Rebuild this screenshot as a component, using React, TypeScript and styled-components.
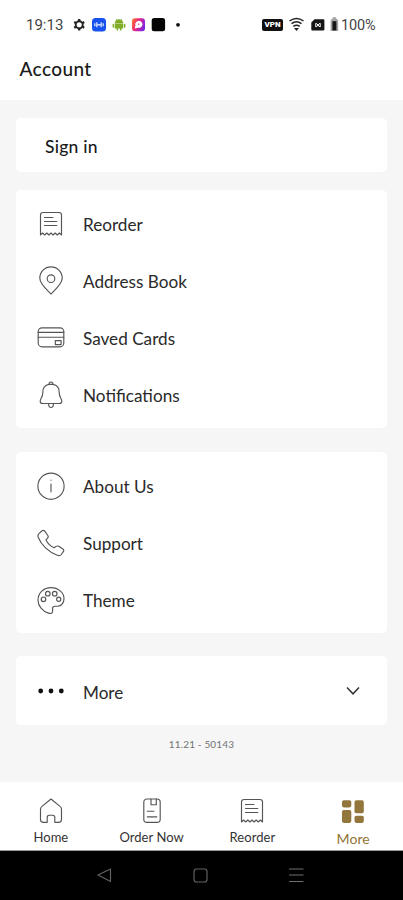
import React from "react";
import styled, { createGlobalStyle } from "styled-components";

const GlobalStyle = createGlobalStyle`
  * { box-sizing: border-box; }
  body { margin: 0; background: #f6f6f6; }
`;

const Screen = styled.div`
  width: 403px;
  height: 900px;
  display: flex;
  flex-direction: column;
  overflow: hidden;
  background: #f6f6f6;
  color: #2a2a2a;
  font-family: Lato, "Open Sans", sans-serif;
`;

const StatusBar = styled.div`
  height: 50px;
  flex: none;
  display: flex;
  align-items: center;
  justify-content: space-between;
  padding: 0 26px 0 26px;
  background: #fff;
  font-family: Roboto, sans-serif;
  font-size: 15px;
  color: #444;
`;

const Cluster = styled.div<{ $gap: number }>`
  display: flex;
  align-items: center;
  gap: ${(p) => p.$gap}px;
`;

const Clock = styled.span`
  width: 40px;
  white-space: nowrap;
`;

const Battery = styled.span`
  width: 36px;
  font-size: 14.5px;
  letter-spacing: -0.15px;
  white-space: nowrap;
`;

const Header = styled.header`
  height: 50px;
  flex: none;
  padding: 6px 19px 0 19.5px;
  background: #fff;
`;

const Title = styled.h1`
  margin: 0;
  font-size: 19px;
  line-height: 26px;
  font-weight: 500;
  letter-spacing: 0.4px;
  color: #1a1a1a;
`;

const Content = styled.main`
  flex: 1;
  padding: 18px 16px 0;
`;

const Card = styled.section<{ $height: number; $top?: number; $bottom: number }>`
  height: ${(p) => p.$height}px;
  margin-bottom: ${(p) => p.$bottom}px;
  padding-top: ${(p) => p.$top ?? 0}px;
  border-radius: 5px;
  background: #fff;
`;

const SignIn = styled.div`
  height: 54px;
  padding: 2px 29px 0;
  display: flex;
  align-items: center;
  font-size: 17.5px;
  font-weight: 500;
  letter-spacing: 0.25px;
  color: #1a1a1a;
`;

const Row = styled.div<{ $height?: number }>`
  height: ${(p) => p.$height ?? 57}px;
  display: flex;
  align-items: center;
  padding: 0 26px 0 20px;
  gap: 17px;
`;

const RowLabel = styled.span<{ $drop?: number }>`
  flex: 1;
  padding-top: ${(p) => p.$drop ?? 1}px;
  font-size: 17.15px;
  line-height: 22px;
  white-space: nowrap;
`;

const Icon = styled.svg<{ $size?: number }>`
  display: block;
  flex: none;
  width: ${(p) => p.$size ?? 30}px;
  height: ${(p) => p.$size ?? 30}px;
  fill: none;
  stroke: #555;
  stroke-width: 1.15;
  stroke-linecap: round;
  stroke-linejoin: round;
`;

const Glyph = styled.svg`
  display: block;
  flex: none;
`;

const Version = styled.div`
  text-align: center;
  font-size: 10px;
  line-height: 14px;
  color: #737373;
  letter-spacing: 0.15px;
`;

const TabBar = styled.nav`
  height: 69px;
  flex: none;
  display: grid;
  grid-template-columns: repeat(4, 1fr);
  background: #fff;
  border-bottom: 1px solid #999;
`;

const Tab = styled.div<{ $active?: boolean }>`
  display: flex;
  flex-direction: column;
  align-items: center;
  padding-top: 14px;
  padding-left: 1px;
  font-size: ${(p) => (p.$active ? 14 : 13)}px;
  line-height: 16px;
  letter-spacing: 0.05px;
  white-space: nowrap;
  color: ${(p) => (p.$active ? "#927337" : "#333")};
`;

const TabLabel = styled.span<{ $offset: number }>`
  margin-top: ${(p) => p.$offset}px;
`;

const SystemBar = styled.div`
  height: 49px;
  flex: none;
  display: flex;
  justify-content: center;
  align-items: center;
  gap: 76px;
  padding: 0 3px 1px 0;
  background: #000;
`;

const ReceiptShape = () => (
  <path d="M4.5 26V6Q4.5 3.5 7 3.5H23Q25.5 3.5 25.5 6V26L23.4 24L21.3 26L19.2 24L17.1 26L15 24L12.9 26L10.8 24L8.7 26L6.6 24Z M8.5 8.5H17 M8.5 12.5H20.8 M8.5 16.5H20.8" />
);

const accountRows = [
  { label: "Reorder", art: <ReceiptShape /> },
  {
    label: "Address Book",
    art: (
      <>
        <path d="M15 28C12 24.7 3.8 18.5 3.8 12.1A11.2 11.2 0 0 1 26.2 12.1C26.2 18.5 18 24.7 15 28Z" />
        <circle cx="15" cy="12.7" r="3.8" />
      </>
    ),
  },
  {
    label: "Saved Cards",
    art: (
      <>
        <rect x="2.2" y="4.8" width="25.6" height="19" rx="3.8" />
        <path d="M2.2 9.4H27.8M2.2 14.2H27.8" />
        <rect x="19.3" y="17.6" width="5.8" height="4" />
      </>
    ),
  },
  {
    label: "Notifications",
    art: (
      <>
        <path d="M13 4.4C13 1.2 17 1.2 17 4.4C21.5 5.2 23.2 8.6 23.2 12.4C23.2 17.8 25.8 18.4 25.8 21.2C25.8 23 24.8 23.5 23.3 23.5H6.7C5.2 23.5 4.2 23 4.2 21.2C4.2 18.4 6.8 17.8 6.8 12.4C6.8 8.6 8.5 5.2 13 4.4Z" />
        <path d="M12.6 24C12.6 28.7 17.4 28.7 17.4 24M13 4.4H17" />
      </>
    ),
  },
];

const infoRows = [
  {
    label: "About Us",
    art: (
      <>
        <circle cx="15" cy="14.2" r="13.1" />
        <path d="M15 12V19.8M15 8V8.2" />
      </>
    ),
  },
  {
    label: "Support",
    art: (
      <path d="M3.2 4.4L6.1 1.8Q7.6 0.7 8.8 2.2L11.8 6.5Q12.7 8 11.6 9.2L10 10.9C11.6 14.2 14.6 17.1 18.1 18.7L20 17.4Q21.2 16.6 22.7 17.3L26.9 20Q28.4 21.2 27.3 22.7L25.3 25.5Q23.8 27.3 21.3 26.2C13 23.5 5.3 16 2.2 8.2Q1.4 5.8 3.2 4.4Z" />
    ),
  },
  {
    label: "Theme",
    art: (
      <>
        <path d="M16.6 25.1C16.6 27.8 14.7 27.9 12.3 27.1C6.6 25.1 2 20.1 2 14.2C2 7 7.8 1.6 15 1.6S28 6.7 28 12.4C28 16.5 25.7 20.2 21.5 20.2H18.8Q16.6 20.2 16.6 22.4Z" />
        <circle cx="7.5" cy="13.3" r="2.3" />
        <circle cx="11.8" cy="7.7" r="2.3" />
        <circle cx="18.7" cy="7.7" r="2.3" />
        <circle cx="22.7" cy="13.2" r="2.1" />
      </>
    ),
  },
];

function StatusIcons() {
  return (
    <Glyph width="116" height="18" viewBox="0 0 116 18">
      <g transform="translate(13.2 8.8)">
        <circle r="3.5" fill="none" stroke="#222" strokeWidth="1.9" />
        <path d="M0-3.8V-5.8M0 3.8V5.8M3.3-1.9L5-2.9M-3.3 1.9L-5 2.9M3.3 1.9L5 2.9M-3.3-1.9L-5-2.9" stroke="#222" strokeWidth="2.3" />
      </g>
      <rect x="26" y="2" width="14" height="13.5" rx="3.5" fill="#1752ee" />
      <path d="M30.8 6.2V11.3M35.2 6.2V11.3M28.8 7.2V10.2M37.2 7.2V10.2M30.8 8.8H35.2" stroke="#c9d8ff" strokeWidth="1.4" />
      <g fill="#80ad27">
        <path d="M48.7 7.4A4.3 4.1 0 0 1 57.3 7.4Z" />
        <path d="M48.7 7.8H57.3V12.4H55.4V14.5H53.9V12.4H52.1V14.5H50.6V12.4H48.7Z" />
        <rect x="46.6" y="7.7" width="1.4" height="4" rx=".7" />
        <rect x="58" y="7.7" width="1.4" height="4" rx=".7" />
        <path d="M50 3L51.2 4.5M56 3L54.8 4.5" stroke="#80ad27" strokeWidth=".7" />
      </g>
      <defs>
        <linearGradient id="chat" x1="0" y1=".3" x2="1" y2=".7">
          <stop stopColor="#ff6a32" />
          <stop offset=".4" stopColor="#e82485" />
          <stop offset="1" stopColor="#7826e8" />
        </linearGradient>
      </defs>
      <rect x="66" y="2.3" width="13" height="13" rx="3" fill="url(#chat)" />
      <path d="M68.7 12.5L69.5 9.5A3.6 3.5 0 1 1 72.3 11.8Z" fill="#fff" />
      <circle cx="72.7" cy="8.2" r=".8" fill="#e64286" />
      <rect x="85.7" y="2" width="13.4" height="13.3" rx="2.5" fill="#050505" />
      <circle cx="112" cy="8.8" r="1.9" fill="#111" />
    </Glyph>
  );
}

const VpnBadge = styled.span`
  width: 21px;
  height: 12px;
  border-radius: 2px;
  background: #111;
  color: #fff;
  font: 900 8px/12px Roboto, sans-serif;
  text-align: center;
`;

function SignalIcons() {
  return (
    <Glyph width="52" height="18" viewBox="0 0 52 18">
      <g fill="none" stroke="#222" strokeWidth="1.5">
        <path d="M.5 5Q7.5-.2 14.5 5M2.5 7.7Q7.5 4 12.5 7.7M4.3 10.3Q7.5 8 10.7 10.3" />
        <path d="M6.6 12.7H8.4L7.5 13.8Z" fill="#222" />
      </g>
      <path d="M25.5 3.2H34.2Q35.4 3.2 35.4 4.4V13.6Q35.4 14.6 34.2 14.6H23.4Q22.3 14.6 22.3 13.6V6.4Z" fill="#151515" />
      <path d="M27.2 7.2L30.8 11M30.8 7.2L27.2 11M26.8 7.2V11M31.2 7.2V11" stroke="#fff" />
      <path d="M43.6 1.2H47.2V2.8Q49.2 3.2 49.2 4.8V15H41.6V4.8Q41.6 3.2 43.6 2.8Z" fill="#a4a4a4" />
      <rect x="43.4" y="5.2" width="4" height="9.2" fill="#151515" />
    </Glyph>
  );
}

interface MenuItem {
  label: string;
  art: React.ReactNode;
}

const MenuRows = ({ items }: { items: MenuItem[] }) => (
  <>
    {items.map((item) => (
      <Row key={item.label}>
        <Icon viewBox="0 0 30 30">{item.art}</Icon>
        <RowLabel>{item.label}</RowLabel>
      </Row>
    ))}
  </>
);

export default function App() {
  return (
    <>
      <GlobalStyle />
      <Screen>
        <StatusBar>
          <Cluster $gap={0}>
            <Clock>19:13</Clock>
            <StatusIcons />
          </Cluster>
          <Cluster $gap={0}>
            <Cluster $gap={6}>
              <VpnBadge>VPN</VpnBadge>
              <SignalIcons />
            </Cluster>
            <Battery>100%</Battery>
          </Cluster>
        </StatusBar>
        <Header>
          <Title>Account</Title>
        </Header>
        <Content>
          <Card $height={53.5} $bottom={18}>
            <SignIn>Sign in</SignIn>
          </Card>
          <Card $height={238.5} $top={6} $bottom={24}>
            <MenuRows items={accountRows} />
          </Card>
          <Card $height={181} $top={6} $bottom={23}>
            <MenuRows items={infoRows} />
          </Card>
          <Card $height={69} $bottom={12}>
            <Row $height={70}>
              <Icon viewBox="0 0 30 30">
                <g fill="#111" stroke="none">
                  <circle cx="4.7" cy="15" r="2.4" />
                  <circle cx="15" cy="15" r="2.4" />
                  <circle cx="25.3" cy="15" r="2.4" />
                </g>
              </Icon>
              <RowLabel $drop={3}>More</RowLabel>
              <Glyph width="16" height="12" viewBox="0 0 16 12">
                <path d="M2 2.5L8 8.8L14 2.5" fill="none" stroke="#333" strokeWidth="1.5" />
              </Glyph>
            </Row>
          </Card>
          <Version>11.21 - 50143</Version>
        </Content>
        <TabBar>
          <Tab>
            <Icon viewBox="0 0 30 30">
              <path d="M4.5 13.3Q4.5 11.5 6 10.4L15 3L24 10.4Q25.5 11.5 25.5 13.3V23.5Q25.5 26.3 22.5 26.3H18.8V21.3Q18.8 19.2 16.8 19.2H13.2Q11.2 19.2 11.2 21.3V26.3H7.5Q4.5 26.3 4.5 23.5Z" />
            </Icon>
            <TabLabel $offset={3}>Home</TabLabel>
          </Tab>
          <Tab>
            <Icon viewBox="0 0 30 30">
              <rect x="6.8" y="3" width="16.4" height="23.4" rx="3.2" />
              <path d="M14 3V8.7H19.3V3M10.3 15.2H17M10.3 20.8H19.8" />
            </Icon>
            <TabLabel $offset={3}>Order Now</TabLabel>
          </Tab>
          <Tab>
            <Icon viewBox="0 0 30 30">
              <ReceiptShape />
            </Icon>
            <TabLabel $offset={3}>Reorder</TabLabel>
          </Tab>
          <Tab $active>
            <Icon viewBox="0 0 30 30">
              <g fill="#92763c" stroke="none">
                <rect x="4" y="4.2" width="9.3" height="7.2" rx="1.8" />
                <rect x="16.5" y="4.2" width="9.3" height="13" rx="1.8" />
                <rect x="4" y="14" width="9.3" height="12.9" rx="1.8" />
                <rect x="16.5" y="19.7" width="9.3" height="7.2" rx="1.8" />
              </g>
            </Icon>
            <TabLabel $offset={5}>More</TabLabel>
          </Tab>
        </TabBar>
        <SystemBar>
          <Icon $size={20} viewBox="0 0 20 20"><path d="M4 10L16.5 4V16.5Z" stroke="#626262" /></Icon>
          <Icon $size={20} viewBox="0 0 20 20"><rect x="4" y="4" width="13" height="13" rx="2.5" stroke="#626262" /></Icon>
          <Icon $size={20} viewBox="0 0 20 20"><path d="M3.5 4H17M3.5 10H17M3.5 16.5H17" stroke="#707070" /></Icon>
        </SystemBar>
      </Screen>
    </>
  );
}
